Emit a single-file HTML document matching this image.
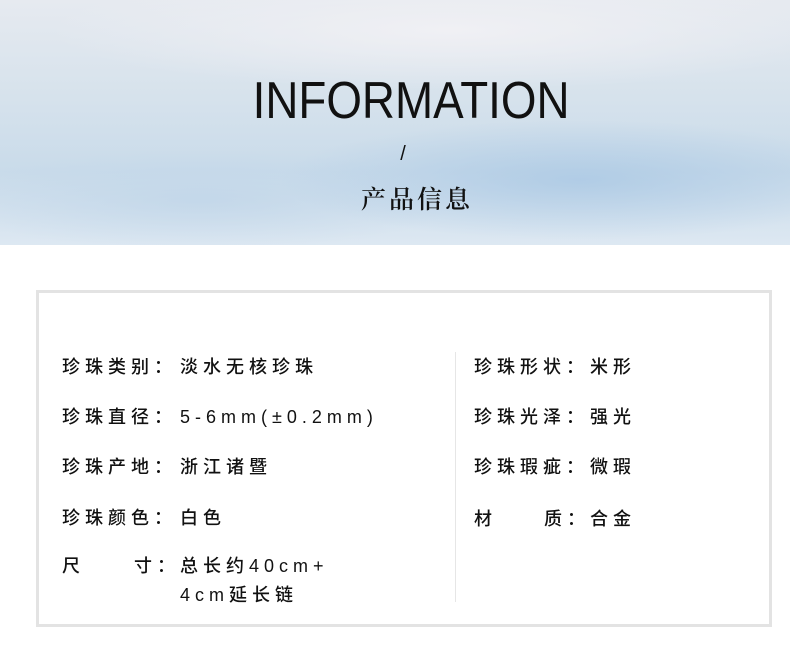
<!DOCTYPE html>
<html><head><meta charset="utf-8"><style>
*{margin:0;padding:0;box-sizing:border-box}
body{width:790px;height:660px;background:#fff;position:relative;overflow:hidden;font-family:"Liberation Sans","Noto Sans CJK SC",sans-serif;color:#111}
.banner{position:absolute;left:0;top:0;width:790px;height:245px;
background:
radial-gradient(ellipse 300px 60px at 580px 180px,rgba(170,200,228,.8),rgba(170,200,228,0)),
radial-gradient(ellipse 260px 50px at 200px 200px,rgba(190,212,232,.7),rgba(190,212,232,0)),
radial-gradient(ellipse 400px 60px at 450px 30px,rgba(240,240,244,1),rgba(240,240,244,0)),
linear-gradient(180deg,#e6eaf0 0%,#d6e2ec 40%,#c9dbea 70%,#dde8f2 100%);}
.t{position:absolute;left:0;width:790px;text-align:center}
.info{top:71px;font-size:52px;line-height:60px;color:#111}
.info span{display:inline-block;transform:scaleX(.88);transform-origin:center;position:relative;left:16px}
.sl{top:142px;font-size:20px;line-height:24px;left:8px}
.cn{top:185px;font-family:"Liberation Serif","Noto Serif CJK SC",serif;font-size:25px;letter-spacing:3px;line-height:32px;left:22px;font-weight:600}
.box{position:absolute;left:36px;top:290px;width:736px;height:337px;border:3px solid #e3e3e3}
.div{position:absolute;left:455px;top:352px;width:1px;height:250px;background:#e6e6e6}
.r{position:absolute;font-size:18px;letter-spacing:5px;line-height:22px;white-space:nowrap;font-weight:500}
</style></head><body>
<div class="banner"></div>
<div class="t info"><span>INFORMATION</span></div>
<div class="t sl">/</div>
<div class="t cn">产品信息</div>
<div class="box"></div>
<div class="div"></div>
<div class="r" style="left:62px;top:356px">珍珠类别：</div><div class="r" style="left:180px;top:356px">淡水无核珍珠</div>
<div class="r" style="left:62px;top:406px">珍珠直径：</div><div class="r" style="left:180px;top:406px">5-6mm(±0.2mm)</div>
<div class="r" style="left:62px;top:456px">珍珠产地：</div><div class="r" style="left:180px;top:456px">浙江诸暨</div>
<div class="r" style="left:62px;top:507px">珍珠颜色：</div><div class="r" style="left:180px;top:507px">白色</div>
<div class="r" style="left:62px;top:555px">尺</div><div class="r" style="left:134px;top:555px">寸：</div><div class="r" style="left:180px;top:555px">总长约40cm+</div>
<div class="r" style="left:180px;top:584px">4cm延长链</div>
<div class="r" style="left:474px;top:356px">珍珠形状：</div><div class="r" style="left:590px;top:356px">米形</div>
<div class="r" style="left:474px;top:406px">珍珠光泽：</div><div class="r" style="left:590px;top:406px">强光</div>
<div class="r" style="left:474px;top:456px">珍珠瑕疵：</div><div class="r" style="left:590px;top:456px">微瑕</div>
<div class="r" style="left:474px;top:508px">材</div><div class="r" style="left:544px;top:508px">质：</div><div class="r" style="left:590px;top:508px">合金</div>
</body></html>
